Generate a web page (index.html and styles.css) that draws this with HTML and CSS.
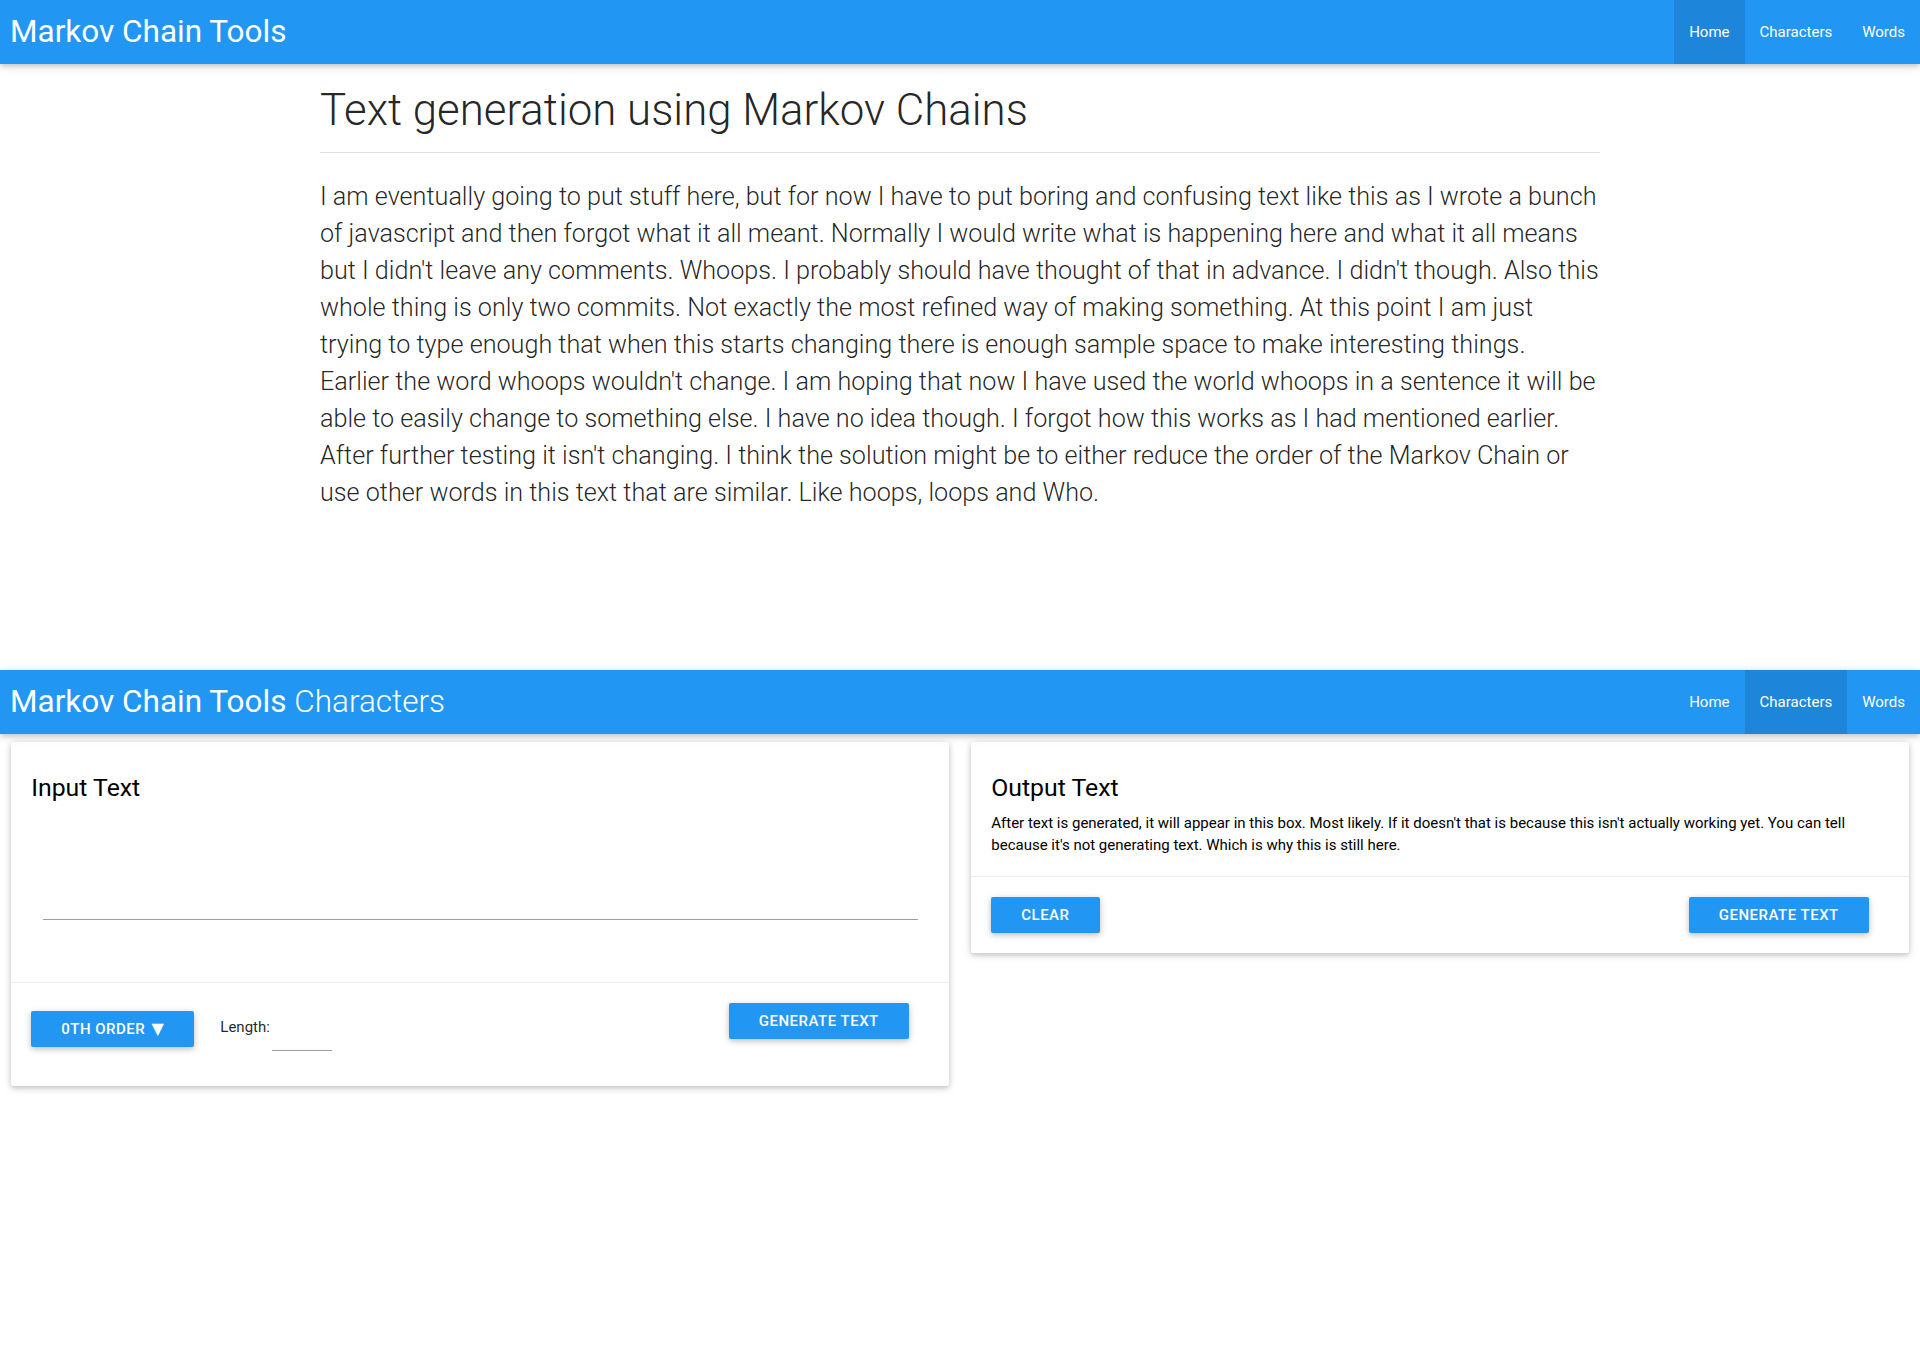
FILE: index.html
```html
<!DOCTYPE html>
<html lang="en">
<head>
<meta charset="utf-8">
<title>Markov Chain Tools</title>
<link rel="stylesheet" href="styles.css">
</head>
<body>
<section class="page page-home">
  <nav class="nav">
    <a class="brand">Markov Chain Tools</a>
    <ul class="nav-links">
      <li class="active"><a>Home</a></li>
      <li><a>Characters</a></li>
      <li><a>Words</a></li>
    </ul>
  </nav>
  <main class="container">
    <h3 class="page-title">Text generation using Markov Chains</h3>
    <div class="divider"></div>
    <p class="flow-text">I am eventually going to put stuff here, but for now I have to put boring and confusing text like this as I wrote a bunch of javascript and then forgot what it all meant. Normally I would write what is happening here and what it all means but I didn't leave any comments. Whoops. I probably should have thought of that in advance. I didn't though. Also this whole thing is only two commits. Not exactly the most refined way of making something. At this point I am just trying to type enough that when this starts changing there is enough sample space to make interesting things. Earlier the word whoops wouldn't change. I am hoping that now I have used the world whoops in a sentence it will be able to easily change to something else. I have no idea though. I forgot how this works as I had mentioned earlier. After further testing it isn't changing. I think the solution might be to either reduce the order of the Markov Chain or use other words in this text that are similar. Like hoops, loops and Who.</p>
  </main>
</section>

<section class="page page-chars">
  <nav class="nav">
    <a class="brand">Markov Chain Tools <span class="brand-sub">Characters</span></a>
    <ul class="nav-links">
      <li><a>Home</a></li>
      <li class="active"><a>Characters</a></li>
      <li><a>Words</a></li>
    </ul>
  </nav>
  <div class="row">
    <div class="col">
      <div class="card">
        <div class="card-content">
          <span class="card-title">Input Text</span>
          <div class="textarea-field"><div class="textarea"></div></div>
        </div>
        <div class="card-action">
          <div class="action-left">
            <a class="btn">0th Order <span class="caret">▼</span></a>
            <label class="length-label">Length:</label>
            <div class="length-input"></div>
          </div>
          <a class="btn btn-right">Generate Text</a>
        </div>
      </div>
    </div>
    <div class="col">
      <div class="card">
        <div class="card-content">
          <span class="card-title">Output Text</span>
          <p class="output-text">After text is generated, it will appear in this box. Most likely. If it doesn't that is because this isn't actually working yet. You can tell because it's not generating text. Which is why this is still here.</p>
        </div>
        <div class="card-action">
          <a class="btn">Clear</a>
          <a class="btn btn-right">Generate Text</a>
        </div>
      </div>
    </div>
  </div>
</section>
</body>
</html>
```

FILE: styles.css
```css
* { box-sizing: border-box; }

html, body {
  margin: 0;
  padding: 0;
}

body {
  font-family: Roboto, "Liberation Sans", sans-serif;
  font-size: 15px;
  line-height: 1.5;
  color: rgba(0, 0, 0, 0.87);
  background: #fff;
}

.page-home {
  min-height: 670px;
}

/* nav */
.nav {
  display: flex;
  align-items: stretch;
  justify-content: space-between;
  height: 64px;
  line-height: 64px;
  background: #2196f3;
  color: #fff;
  box-shadow: 0 2px 5px 0 rgba(0, 0, 0, 0.16), 0 2px 10px 0 rgba(0, 0, 0, 0.12);
  position: relative;
  z-index: 1;
}

.brand {
  font-size: 31.5px;
  padding-left: 10px;
  color: #fff;
  white-space: nowrap;
}

.brand-sub {
  font-family: "Roboto Light", Roboto, sans-serif;
  font-weight: 300;
}

.nav-links {
  display: flex;
  list-style: none;
  margin: 0;
  padding: 0;
}

.nav-links li a {
  display: block;
  padding: 0 15px;
  font-size: 15px;
  color: #fff;
}

.nav-links li.active {
  background: rgba(0, 0, 0, 0.1);
}

/* home */
.container {
  max-width: 1280px;
  width: 70%;
  margin: 0 auto;
}

.page-title {
  font-family: "Roboto Light", Roboto, sans-serif;
  font-size: 43.8px;
  font-weight: 300;
  line-height: 110%;
  margin: 22px 0 17.5px 0;
  color: rgba(0, 0, 0, 0.87);
}

.divider {
  height: 1px;
  background: #e0e0e0;
}

.flow-text {
  font-family: "Roboto Light", Roboto, sans-serif;
  font-size: 25.18px;
  font-weight: 300;
  line-height: 37px;
  margin: 25px 0 0 0;
}

/* grid */
.row {
  display: flex;
}

.col {
  width: 50%;
  padding: 0 11.25px;
}

/* cards */
.card {
  background: #fff;
  border-radius: 2px;
  margin: 7.5px 0 15px 0;
  box-shadow: 0 2px 5px 0 rgba(0, 0, 0, 0.16), 0 2px 10px 0 rgba(0, 0, 0, 0.12);
}

.card-content {
  padding: 22px 20px 20px 20px;
}

.card-title {
  display: block;
  font-size: 24.8px;
  font-weight: 400;
  line-height: 48px;
  color: #000;
}

.textarea-field {
  padding: 0 11.25px;
  margin: 16px 0 42px 0;
}

.textarea {
  height: 92px;
  border-bottom: 1px solid #9e9e9e;
}

.output-text {
  margin: 0;
  font-size: 15px;
  line-height: 22px;
  color: #000;
}

.card-action {
  display: flex;
  align-items: flex-start;
  padding: 20px;
  border-top: 1px solid rgba(160, 160, 160, 0.2);
}

.action-left {
  display: flex;
  align-items: flex-start;
}

.btn {
  display: inline-block;
  height: 36px;
  line-height: 36px;
  padding: 0 30px;
  margin-right: 20px;
  border-radius: 2px;
  background: #2196f3;
  color: #fff;
  font-size: 15px;
  font-weight: 500;
  text-transform: uppercase;
  letter-spacing: 0.5px;
  white-space: nowrap;
  box-shadow: 0 2px 5px 0 rgba(0, 0, 0, 0.16), 0 2px 10px 0 rgba(0, 0, 0, 0.12);
}

.action-left .btn {
  margin-top: 8px;
}

.caret {
  font-family: "DejaVu Sans", sans-serif;
  font-size: 16px;
  padding-left: 2px;
}

.btn-right {
  margin-left: auto;
}

.length-label {
  font-size: 15px;
  line-height: 36px;
  margin: 6px 2px 0 6px;
  color: rgba(0, 0, 0, 0.87);
}

.length-input {
  width: 60px;
  height: 48px;
  border-bottom: 1px solid #9e9e9e;
  margin-bottom: 15px;
}
```
